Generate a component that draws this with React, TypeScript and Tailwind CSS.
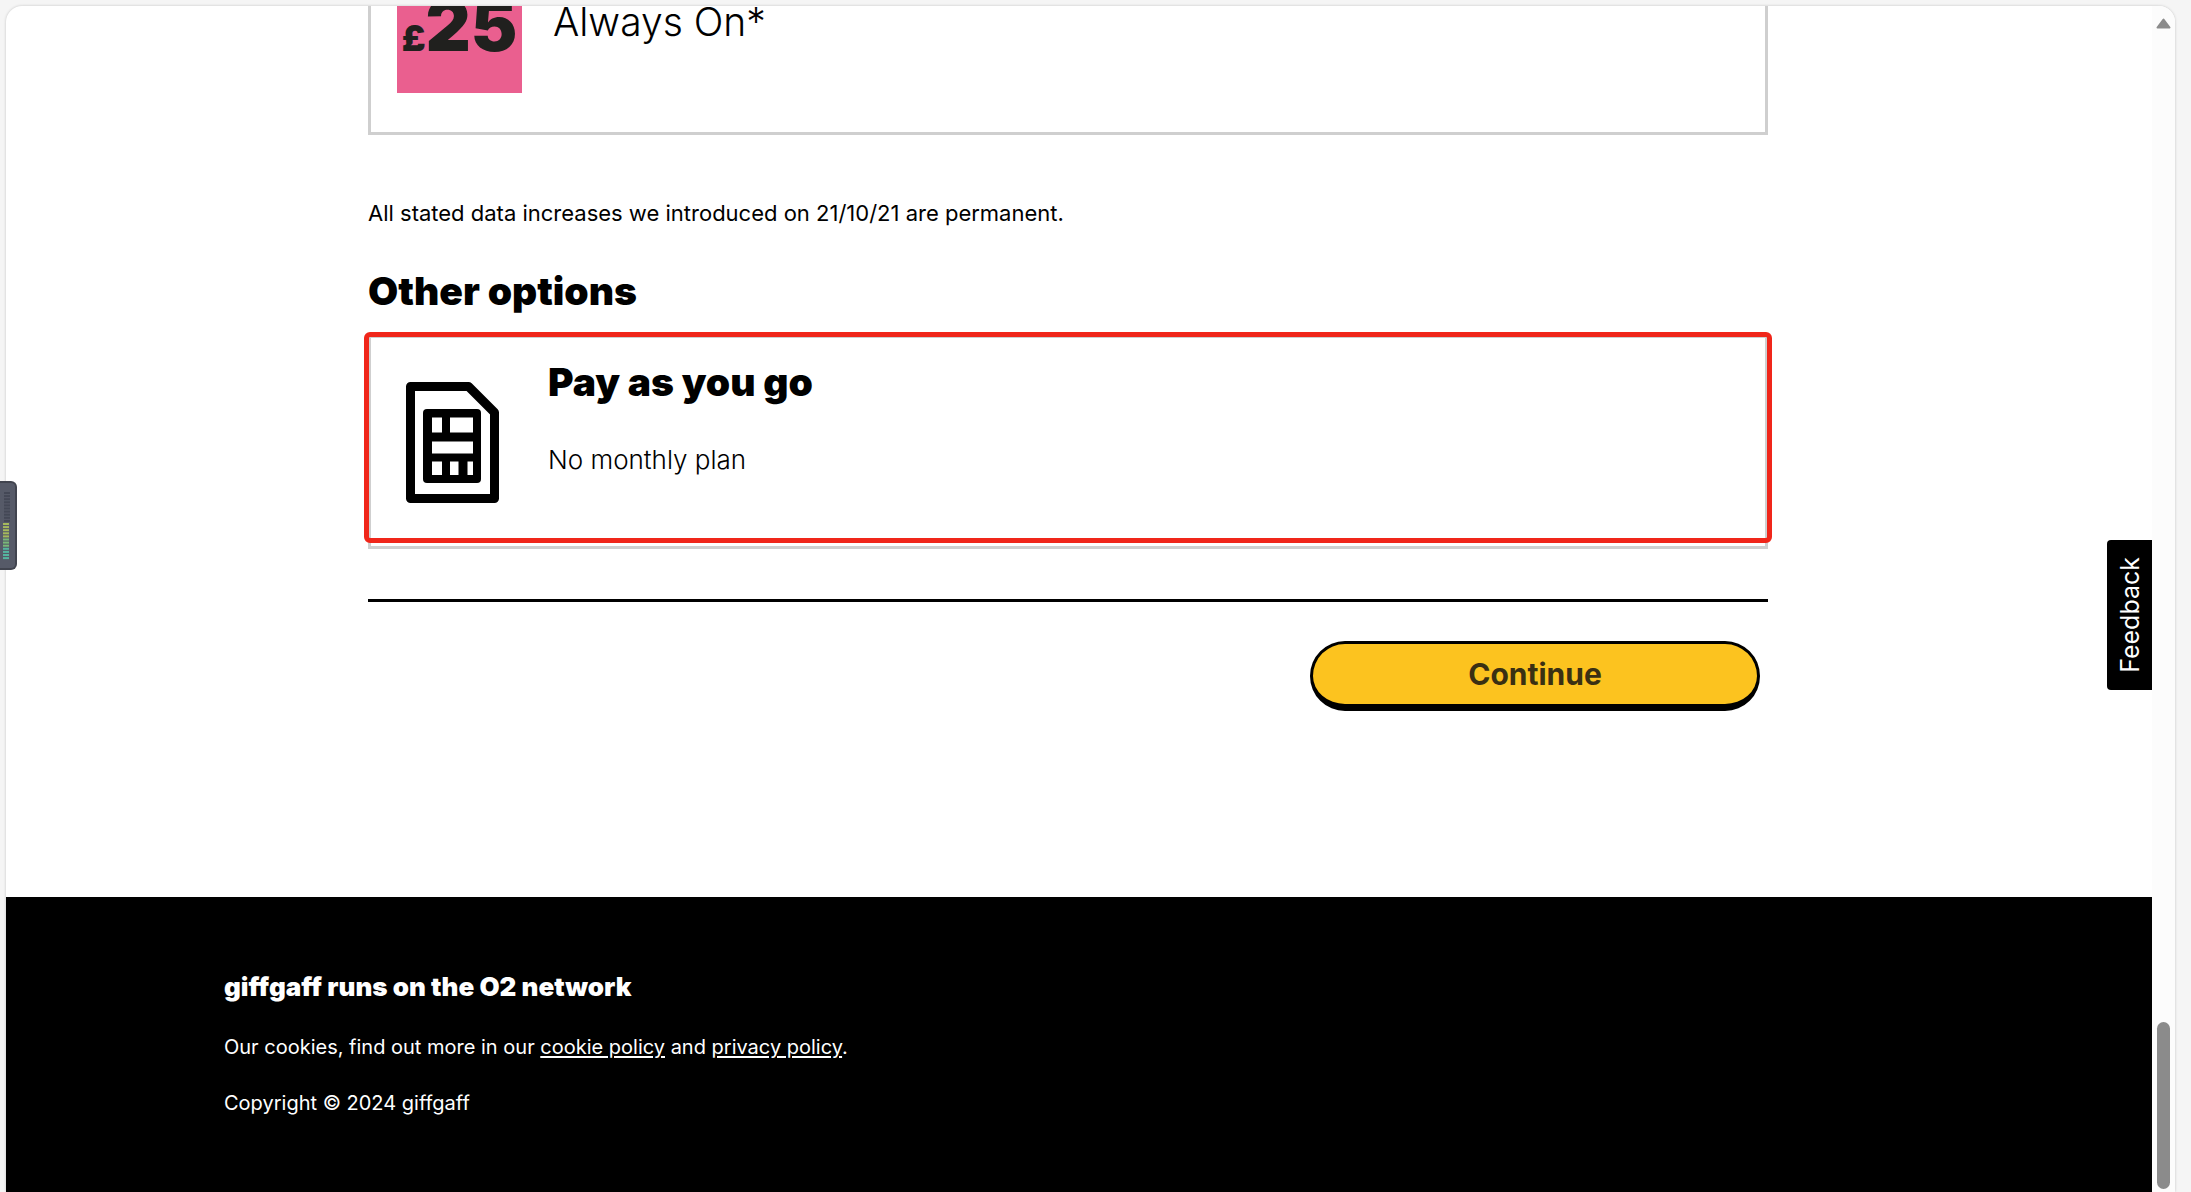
import React from "react";

const SimIcon: React.FC = () => (
  <svg width="93" height="121" viewBox="0 0 93 121" fill="none" aria-hidden="true">
    <path
      d="M4.5 4.5H62.5L88.5 30.5V116.5H4.5Z"
      stroke="#000"
      strokeWidth="9"
      strokeLinejoin="round"
    />
    <rect x="17" y="27" width="58" height="74" rx="4" fill="#000" />
    <g fill="#fff">
      <rect x="26" y="35.5" width="10" height="15" />
      <rect x="44" y="35.5" width="23" height="15" />
      <rect x="26" y="59.5" width="41" height="12" />
      <rect x="26" y="79.5" width="10" height="13.5" />
      <rect x="44" y="79.5" width="8.5" height="13.5" />
      <rect x="61.5" y="79.5" width="5.5" height="13.5" />
    </g>
  </svg>
);

const LevelMeter: React.FC = () => (
  <div className="absolute left-0 top-[481px] w-[17px] h-[89px] rounded-r-md border-2 border-l-0 border-[#41444f] bg-[#565a68]">
    <svg width="15" height="85" viewBox="0 0 15 85" aria-hidden="true">
      {Array.from({ length: 22 }, (_, i) => (
        <rect
          key={i}
          x={i < 10 ? 4 : 3}
          y={9 + i * 3.1}
          width="6"
          height="2"
          fill={i < 10 ? "#444856" : i < 15 ? "#a5b95c" : i < 18 ? "#79b878" : "#55b5a0"}
        />
      ))}
    </svg>
  </div>
);

const Scrollbar: React.FC = () => (
  <div className="w-[23px] shrink-0 flex flex-col items-center justify-between bg-[#fcfcfc] pt-3 pb-[3px]">
    <svg width="15" height="11" viewBox="0 0 15 11" aria-hidden="true">
      <path d="M7.5 1.5L13.5 9.5H1.5Z" fill="#8b8b8b" stroke="#8b8b8b" strokeWidth="2" strokeLinejoin="round" />
    </svg>
    <div className="w-[13px] h-[167px] rounded-full bg-[#8b8b8b]" />
  </div>
);

const Plans: React.FC = () => (
  <main className="w-full max-w-[1710px] mx-auto pl-36 pr-[166px] pb-[186px]">
    <div className="-mt-[71px] h-[200px] border-3 border-[#cfcfcf] pl-[26px] pt-[30px] flex gap-[31px]">
      <div className="size-[125px] shrink-0 bg-[#ea5f8f] text-[#20201e] flex items-baseline justify-center pt-[22px] font-black leading-[72px]">
        <span className="text-[36px]">£</span>
        <span className="text-[70px]">25</span>
      </div>
      <p className="pt-9 text-[39px] leading-9 font-light">Always On*</p>
    </div>

    <p className="mt-16 text-[22px] leading-7">
      All stated data increases we introduced on 21/10/21 are permanent.
    </p>
    <h2 className="mt-[38px] text-[39px] leading-[52px] font-black">Other options</h2>

    <label className="relative mt-[18px] h-[214px] border-3 border-[#cfcfcf] pl-[35px] flex gap-[49px] cursor-pointer">
      <input type="radio" name="plan" className="sr-only" />
      <span className="pt-11">
        <SimIcon />
      </span>
      <span className="flex flex-col pt-[18px]">
        <span className="text-[39px] leading-[52px] font-black">Pay as you go</span>
        <span className="mt-[34px] text-[26px] leading-9 font-light">No monthly plan</span>
      </span>
      <span className="absolute -inset-x-[7px] -top-[6px] bottom-[3px] rounded-md border-5 border-[#f0261a]" />
    </label>

    <hr className="mt-[50px] border-t-3 border-black" />
    <div className="mt-[39px] flex justify-end pr-2">
      <button
        type="button"
        className="w-[450px] h-[70px] rounded-full border-3 border-b-7 border-black bg-[#fcc31f] text-[#3a3013] text-[30px] leading-9 font-bold cursor-pointer"
      >
        Continue
      </button>
    </div>
  </main>
);

const Footer: React.FC = () => (
  <footer className="grow bg-black text-white">
    <div className="w-full max-w-[1710px] mx-auto pt-[72px] pb-14">
      <h3 className="text-[26px] leading-9 font-black">giffgaff runs on the O2 network</h3>
      <p className="mt-7 text-[20px] leading-7">
        Our cookies, find out more in our{" "}
        <a href="#cookies" className="underline underline-offset-2">cookie policy</a> and{" "}
        <a href="#privacy" className="underline underline-offset-2">privacy policy</a>.
      </p>
      <p className="mt-7 text-[20px] leading-7">Copyright © 2024 giffgaff</p>
    </div>
  </footer>
);

export default function App() {
  return (
    <div className="relative min-h-screen flex bg-[#f5f5f5] pt-[6px] pl-[6px] pr-4 text-black font-['Inter',sans-serif]">
      <div className="grow flex overflow-hidden rounded-t-2xl bg-white shadow-[0_0_3px_rgba(0,0,0,0.2)]">
        <div className="relative grow flex flex-col">
          <Plans />
          <Footer />
          <button
            type="button"
            className="absolute right-0 top-[534px] w-[45px] h-[150px] flex items-center justify-center rounded-l-[4px] bg-black text-white text-[25px] leading-7 cursor-pointer"
          >
            <span className="[writing-mode:vertical-rl] rotate-180">Feedback</span>
          </button>
        </div>
        <Scrollbar />
      </div>
      <LevelMeter />
    </div>
  );
}
